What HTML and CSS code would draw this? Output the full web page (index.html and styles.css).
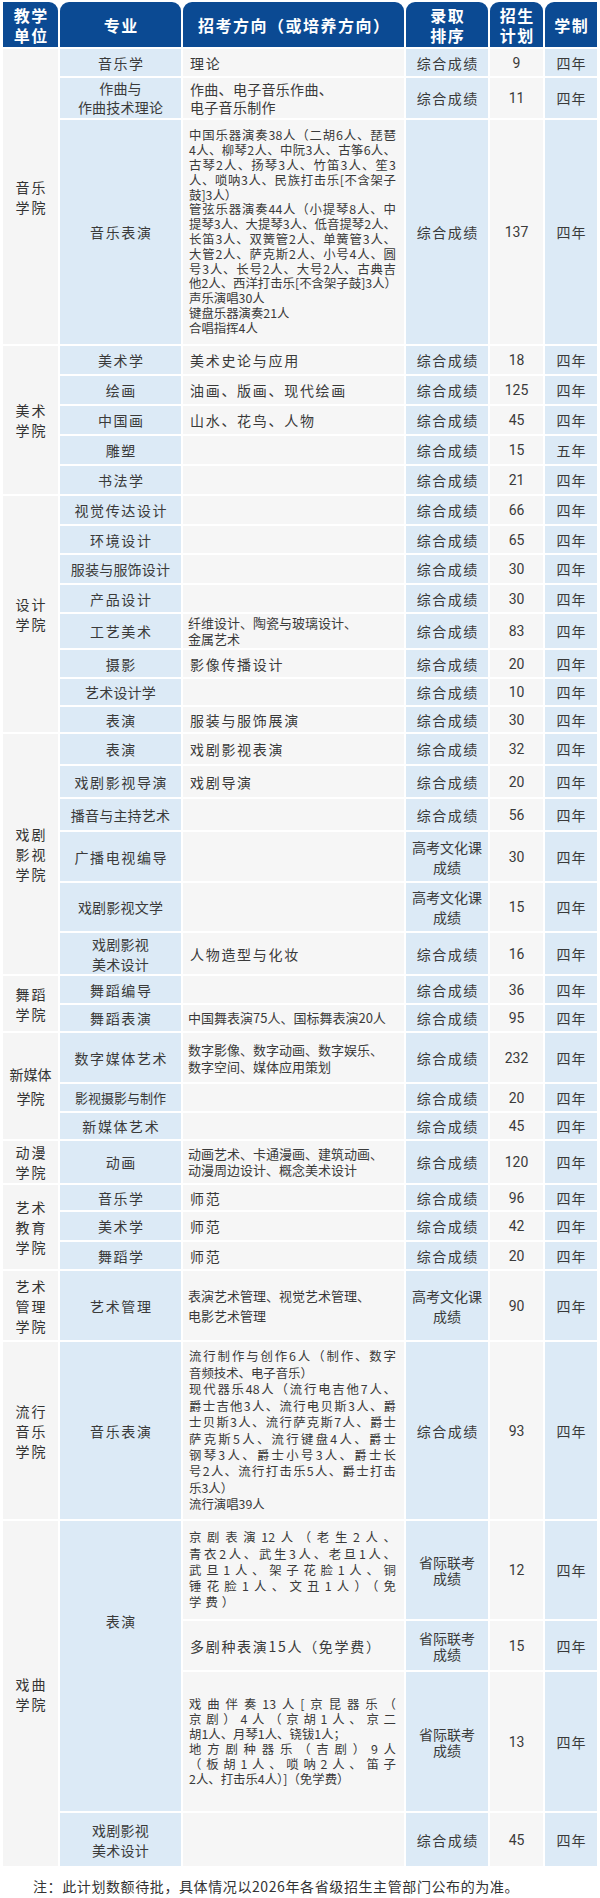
FILE: index.html
```html
<!DOCTYPE html>
<html lang="zh-CN">
<head>
<meta charset="utf-8">
<title>招生计划</title>
<link rel="stylesheet" href="styles.css">
</head>
<body>
<table class="plan">
<colgroup>
<col class="c1"><col class="c2"><col class="c3"><col class="c4"><col class="c5"><col class="c6">
</colgroup>
<thead>
<tr>
<th class="first">教学<br>单位</th>
<th>专业</th>
<th>招考方向（或培养方向）</th>
<th>录取<br>排序</th>
<th>招生<br>计划</th>
<th class="last">学制</th>
</tr>
</thead>
<tbody>
<!-- 音乐学院 -->
<tr class="h27">
<td class="u" rowspan="3">音乐<br>学院</td>
<td class="m">音乐学</td><td class="d">理论</td><td class="s">综合成绩</td><td class="n">9</td><td class="y">四年</td>
</tr>
<tr class="h40">
<td class="m t lh19">作曲与<br>作曲技术理论</td><td class="d w lh18">作曲、电子音乐作曲、<br>电子音乐制作</td><td class="s">综合成绩</td><td class="n">11</td><td class="y">四年</td>
</tr>
<tr class="h224">
<td class="m">音乐表演</td>
<td class="d blk l148">
<div class="j">中国乐器演奏38人（二胡6人、琵琶</div>
<div class="j">4人、柳琴2人、中阮3人、古筝6人、</div>
<div class="j">古琴2人、扬琴3人、竹笛3人、笙3</div>
<div class="j">人、唢呐3人、民族打击乐[不含架子</div>
<div>鼓]3人）</div>
<div class="j">管弦乐器演奏44人（小提琴8人、中</div>
<div class="j">提琴3人、大提琴3人、低音提琴2人、</div>
<div class="j">长笛3人、双簧管2人、单簧管3人、</div>
<div class="j">大管2人、萨克斯2人、小号4人、圆</div>
<div class="j">号3人、长号2人、大号2人、古典吉</div>
<div class="j">他2人、西洋打击乐[不含架子鼓]3人）</div>
<div>声乐演唱30人</div>
<div>键盘乐器演奏21人</div>
<div>合唱指挥4人</div>
</td>
<td class="s">综合成绩</td><td class="n">137</td><td class="y">四年</td>
</tr>
<!-- 美术学院 -->
<tr class="h28">
<td class="u" rowspan="5">美术<br>学院</td>
<td class="m">美术学</td><td class="d">美术史论与应用</td><td class="s">综合成绩</td><td class="n">18</td><td class="y">四年</td>
</tr>
<tr class="h28"><td class="m">绘画</td><td class="d">油画、版画、现代绘画</td><td class="s">综合成绩</td><td class="n">125</td><td class="y">四年</td></tr>
<tr class="h28"><td class="m">中国画</td><td class="d">山水、花鸟、人物</td><td class="s">综合成绩</td><td class="n">45</td><td class="y">四年</td></tr>
<tr class="h28"><td class="m">雕塑</td><td class="d"></td><td class="s">综合成绩</td><td class="n">15</td><td class="y">五年</td></tr>
<tr class="h28"><td class="m">书法学</td><td class="d"></td><td class="s">综合成绩</td><td class="n">21</td><td class="y">四年</td></tr>
<!-- 设计学院 -->
<tr class="h28">
<td class="u" rowspan="8">设计<br>学院</td>
<td class="m">视觉传达设计</td><td class="d"></td><td class="s">综合成绩</td><td class="n">66</td><td class="y">四年</td>
</tr>
<tr class="h27"><td class="m">环境设计</td><td class="d"></td><td class="s">综合成绩</td><td class="n">65</td><td class="y">四年</td></tr>
<tr class="h28"><td class="m t">服装与服饰设计</td><td class="d"></td><td class="s">综合成绩</td><td class="n">30</td><td class="y">四年</td></tr>
<tr class="h27"><td class="m">产品设计</td><td class="d"></td><td class="s">综合成绩</td><td class="n">30</td><td class="y">四年</td></tr>
<tr class="h34"><td class="m">工艺美术</td><td class="d c lh16">纤维设计、陶瓷与玻璃设计、<br>金属艺术</td><td class="s">综合成绩</td><td class="n">83</td><td class="y">四年</td></tr>
<tr class="h27"><td class="m">摄影</td><td class="d">影像传播设计</td><td class="s">综合成绩</td><td class="n">20</td><td class="y">四年</td></tr>
<tr class="h26"><td class="m t">艺术设计学</td><td class="d"></td><td class="s">综合成绩</td><td class="n">10</td><td class="y">四年</td></tr>
<tr class="h25"><td class="m">表演</td><td class="d">服装与服饰展演</td><td class="s">综合成绩</td><td class="n">30</td><td class="y">四年</td></tr>
<!-- 戏剧影视学院 -->
<tr class="h30">
<td class="u" rowspan="6">戏剧<br>影视<br>学院</td>
<td class="m">表演</td><td class="d">戏剧影视表演</td><td class="s">综合成绩</td><td class="n">32</td><td class="y">四年</td>
</tr>
<tr class="h31"><td class="m">戏剧影视导演</td><td class="d">戏剧导演</td><td class="s">综合成绩</td><td class="n">20</td><td class="y">四年</td></tr>
<tr class="h31"><td class="m t">播音与主持艺术</td><td class="d"></td><td class="s">综合成绩</td><td class="n">56</td><td class="y">四年</td></tr>
<tr class="h49"><td class="m">广播电视编导</td><td class="d"></td><td class="s w lh20">高考文化课<br>成绩</td><td class="n">30</td><td class="y">四年</td></tr>
<tr class="h48"><td class="m t">戏剧影视文学</td><td class="d"></td><td class="s w lh20">高考文化课<br>成绩</td><td class="n">15</td><td class="y">四年</td></tr>
<tr class="h41"><td class="m t">戏剧影视<br>美术设计</td><td class="d">人物造型与化妆</td><td class="s">综合成绩</td><td class="n">16</td><td class="y">四年</td></tr>
<!-- 舞蹈学院 -->
<tr class="h27">
<td class="u" rowspan="2">舞蹈<br>学院</td>
<td class="m">舞蹈编导</td><td class="d"></td><td class="s">综合成绩</td><td class="n">36</td><td class="y">四年</td>
</tr>
<tr class="h26"><td class="m">舞蹈表演</td><td class="d c">中国舞表演75人、国标舞表演20人</td><td class="s">综合成绩</td><td class="n">95</td><td class="y">四年</td></tr>
<!-- 新媒体学院 -->
<tr class="h49">
<td class="u tight lh24" rowspan="3">新媒体<br>学院</td>
<td class="m">数字媒体艺术</td><td class="d c lh17">数字影像、数字动画、数字娱乐、<br>数字空间、媒体应用策划</td><td class="s">综合成绩</td><td class="n">232</td><td class="y">四年</td>
</tr>
<tr class="h27"><td class="m t sm">影视摄影与制作</td><td class="d"></td><td class="s">综合成绩</td><td class="n">20</td><td class="y">四年</td></tr>
<tr class="h26"><td class="m">新媒体艺术</td><td class="d"></td><td class="s">综合成绩</td><td class="n">45</td><td class="y">四年</td></tr>
<!-- 动漫学院 -->
<tr class="h42">
<td class="u">动漫<br>学院</td>
<td class="m">动画</td><td class="d c lh16">动画艺术、卡通漫画、建筑动画、<br>动漫周边设计、概念美术设计</td><td class="s">综合成绩</td><td class="n">120</td><td class="y">四年</td>
</tr>
<!-- 艺术教育学院 -->
<tr class="h25">
<td class="u" rowspan="3">艺术<br>教育<br>学院</td>
<td class="m">音乐学</td><td class="d">师范</td><td class="s">综合成绩</td><td class="n">96</td><td class="y">四年</td>
</tr>
<tr class="h28"><td class="m">美术学</td><td class="d">师范</td><td class="s">综合成绩</td><td class="n">42</td><td class="y">四年</td></tr>
<tr class="h27"><td class="m">舞蹈学</td><td class="d">师范</td><td class="s">综合成绩</td><td class="n">20</td><td class="y">四年</td></tr>
<!-- 艺术管理学院 -->
<tr class="h69">
<td class="u">艺术<br>管理<br>学院</td>
<td class="m">艺术管理</td><td class="d c lh20">表演艺术管理、视觉艺术管理、<br>电影艺术管理</td><td class="s w lh20">高考文化课<br>成绩</td><td class="n">90</td><td class="y">四年</td>
</tr>
<!-- 流行音乐学院 -->
<tr class="h177">
<td class="u">流行<br>音乐<br>学院</td>
<td class="m">音乐表演</td>
<td class="d blk l164">
<div class="j">流行制作与创作6人（制作、数字</div>
<div>音频技术、电子音乐）</div>
<div class="j">现代器乐48人（流行电吉他7人、</div>
<div class="j">爵士吉他3人、流行电贝斯3人、爵</div>
<div class="j">士贝斯3人、流行萨克斯7人、爵士</div>
<div class="j">萨克斯5人、流行键盘4人、爵士</div>
<div class="j">钢琴3人、爵士小号3人、爵士长</div>
<div class="j">号2人、流行打击乐5人、爵士打击</div>
<div>乐3人）</div>
<div>流行演唱39人</div>
</td>
<td class="s">综合成绩</td><td class="n">93</td><td class="y">四年</td>
</tr>
<!-- 戏曲学院 -->
<tr class="h98">
<td class="u" rowspan="4">戏曲<br>学院</td>
<td class="m hi" rowspan="3">表演</td>
<td class="d blk l162">
<div class="j">京剧表演12人（老生2人、</div>
<div class="j">青衣2人、武生3人、老旦1人、</div>
<div class="j">武旦1人、架子花脸1人、铜</div>
<div class="j">锤花脸1人、文丑1人）（免</div>
<div class="sp">学费）</div>
</td>
<td class="s w lh16">省际联考<br>成绩</td><td class="n">12</td><td class="y">四年</td>
</tr>
<tr class="h49">
<td class="d">多剧种表演15人（免学费）</td>
<td class="s w lh16">省际联考<br>成绩</td><td class="n">15</td><td class="y">四年</td>
</tr>
<tr class="h139">
<td class="d blk l150">
<div class="j">戏曲伴奏13人[京昆器乐（</div>
<div class="j">京剧）4人（京胡1人、京二</div>
<div>胡1人、月琴1人、铙钹1人；</div>
<div class="j">地方剧种器乐（吉剧）9人</div>
<div class="j">（板胡1人、唢呐2人、笛子</div>
<div>2人、打击乐4人）]（免学费）</div>
</td>
<td class="s w lh16">省际联考<br>成绩</td><td class="n">13</td><td class="y">四年</td>
</tr>
<tr class="h53">
<td class="m t">戏剧影视<br>美术设计</td><td class="d"></td><td class="s">综合成绩</td><td class="n">45</td><td class="y">四年</td>
</tr>
</tbody>
</table>
<p class="note">注：此计划数额待批，具体情况以2026年各省级招生主管部门公布的为准。</p>
</body>
</html>
```

FILE: styles.css
```css
* {
  box-sizing: border-box;
}

body {
  margin: 0;
  background: #ffffff;
  font-family: "Noto Sans CJK SC", "Noto Sans", sans-serif;
  color: #3a3a3a;
}

.plan {
  border-collapse: separate;
  border-spacing: 2px;
  table-layout: fixed;
  width: 598px;
  margin-left: 1px;
}

.c1 { width: 55px; }
.c2 { width: 121px; }
.c3 { width: 221px; }
.c4 { width: 82px; }
.c5 { width: 53px; }
.c6 { width: 52px; }

.plan th {
  background: #0b4a93;
  color: #ffffff;
  font-weight: 700;
  font-size: 16px;
  line-height: 20px;
  letter-spacing: 1.5px;
  height: 45px;
  padding: 0 0 0 1.5px;
  border-radius: 9px 9px 0 0;
  vertical-align: middle;
  text-align: center;
  white-space: nowrap;
}

.plan th.first { border-radius: 0 9px 0 0; }
.plan th.last { border-radius: 9px 0 0 0; }

.plan td {
  padding: 0;
  vertical-align: middle;
  text-align: center;
  font-size: 14px;
  line-height: 20px;
  white-space: nowrap;
  overflow: hidden;
}

/* row heights */
.h25 { height: 25px; }
.h26 { height: 26px; }
.h27 { height: 27px; }
.h28 { height: 28px; }
.h30 { height: 30px; }
.h31 { height: 31px; }
.h34 { height: 34px; }
.h40 { height: 40px; }
.h41 { height: 41px; }
.h42 { height: 42px; }
.h48 { height: 48px; }
.h49 { height: 49px; }
.h53 { height: 53px; }
.h69 { height: 69px; }
.h98 { height: 98px; }
.h139 { height: 139px; }
.h177 { height: 177px; }
.h224 { height: 224px; }

/* columns */
.u {
  background: #f5f5f5;
  font-size: 16px;
  line-height: 21px;
  letter-spacing: 2px;
  padding-left: 2px !important;
  color: #333333;
}

.u.tight { letter-spacing: 0; padding-left: 0 !important; }

.m {
  background: #dceaf6;
  letter-spacing: 1.6px;
  padding-left: 1.6px !important;
}

.m.t { letter-spacing: 0.2px; padding-left: 0 !important; }
.m.sm { font-size: 13px; letter-spacing: 0; }
.m.hi { vertical-align: top !important; padding-top: 90px !important; }

.d {
  background: #f6f6f6;
  text-align: left !important;
  padding: 0 8px 0 7px !important;
  letter-spacing: 1.7px;
}

.d.c {
  font-size: 13px;
  letter-spacing: 0;
  padding-left: 5px !important;
}

.d.w { letter-spacing: 0.3px; }

.blk {
  font-size: 12.4px !important;
  letter-spacing: 0;
  padding-left: 6px !important;
}

.blk div {
  white-space: nowrap;
}

.blk .j {
  text-align: justify;
  text-align-last: justify;
}

.blk .sp { letter-spacing: 4px; }

.l148 { line-height: 14.8px !important; }
.l150 { line-height: 15px !important; }
.l162 { line-height: 16.2px !important; }
.l164 { line-height: 16.4px !important; }

.s {
  background: #dceaf6;
  letter-spacing: 1.5px;
  padding-left: 1.5px !important;
}

.s.w { letter-spacing: 0; padding-left: 0 !important; }

.n {
  background: #f6f6f6;
  font-family: Roboto, "Liberation Sans", sans-serif;
  font-size: 15px;
}

.y {
  background: #dceaf6;
  letter-spacing: 1px;
  padding-left: 1px !important;
}

.lh16 { line-height: 16px !important; }
.lh17 { line-height: 17px !important; }
.lh18 { line-height: 18px !important; }
.lh19 { line-height: 19px !important; }
.lh20 { line-height: 20px !important; }
.lh24 { line-height: 24px !important; }

.note {
  margin: 9px 0 0 33px;
  font-size: 14px;
  line-height: 18px;
  letter-spacing: 0.6px;
  color: #333333;
}
```
